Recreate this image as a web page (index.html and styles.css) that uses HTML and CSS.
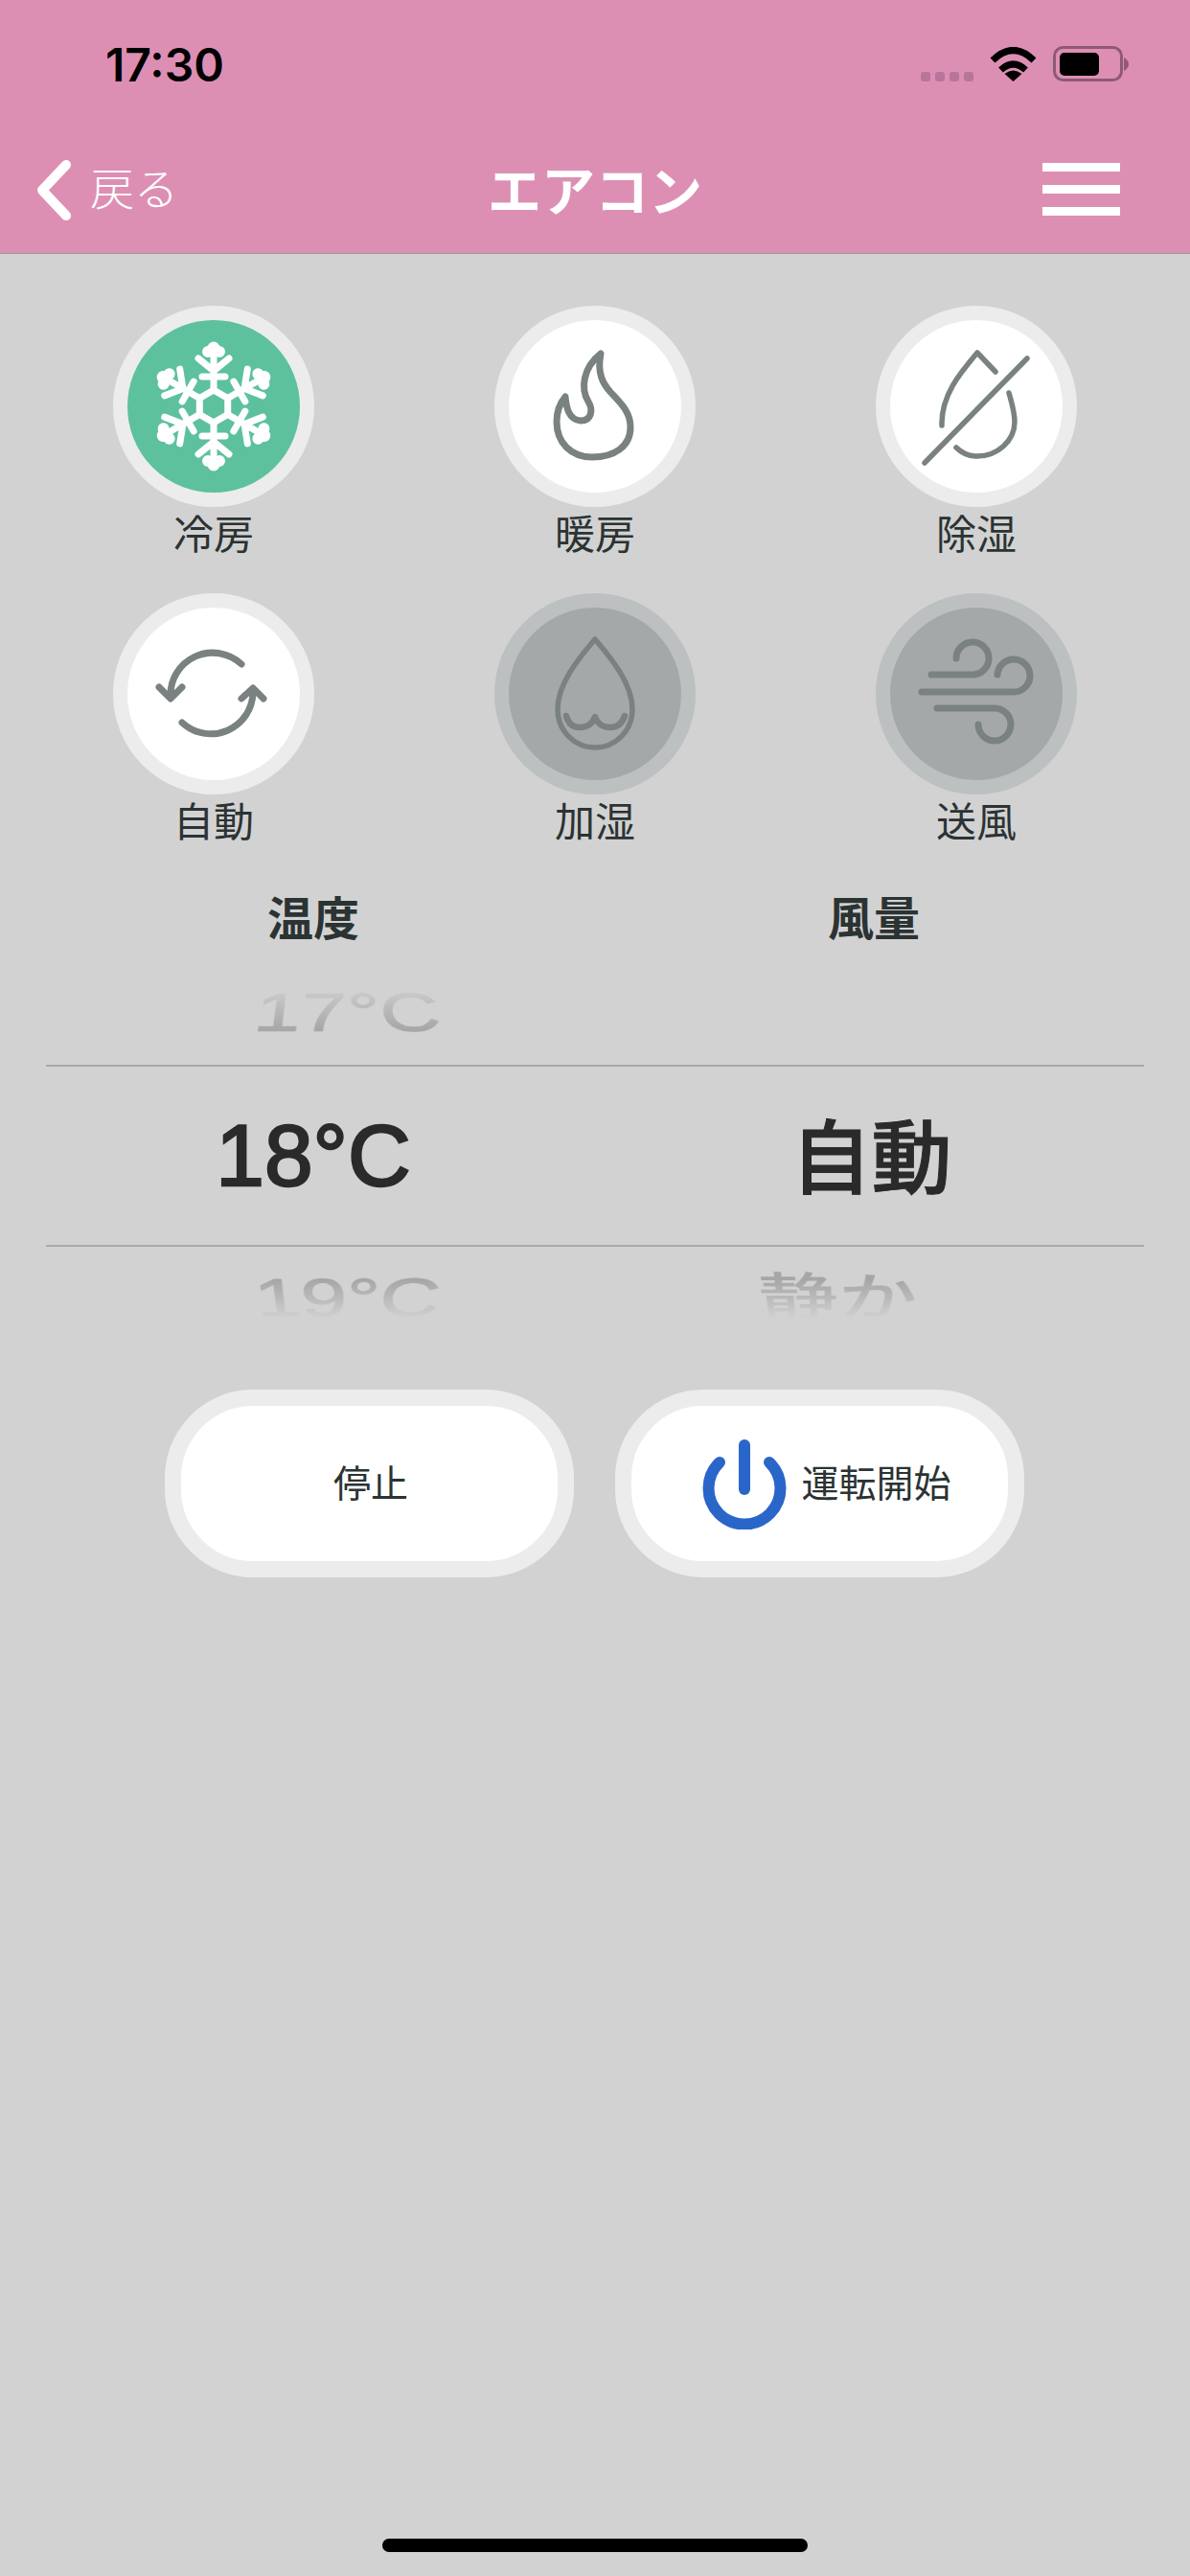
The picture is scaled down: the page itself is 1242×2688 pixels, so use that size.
FILE: index.html
```html
<!DOCTYPE html>
<html lang="ja">
<head>
    <meta charset="UTF-8">
    <meta name="viewport" content="width=device-width, initial-scale=1.0">
    <title>エアコン</title>
    <link rel="stylesheet" href="styles.css">
</head>
<body>
    <!-- 上部バー -->
    <header class="top">
        <div class="status">
            <span class="time">17:30</span>
            <div class="status_icons">
                <div class="dots"><i></i><i></i><i></i><i></i></div>
                <svg class="wifi" viewBox="0 0 49 36">
                    <path d="M3 14Q24.500 -7 46 14" fill="none" stroke="#000" stroke-width="7"/>
                    <path d="M11.500 24Q24.500 12 37.500 24" fill="none" stroke="#000" stroke-width="7"/>
                    <path d="M24.500 36L15.500 28Q24.500 21 33.500 28Z"/>
                </svg>
                <svg class="battery" viewBox="0 0 80 38">
                    <rect x="1.500" y="1.500" width="70" height="34" rx="9" fill="none" stroke="#8d5a78" stroke-width="3"/>
                    <rect x="7" y="7" width="41" height="24" rx="5"/>
                    <path d="M74 12Q79 15 79 19Q79 23 74 26Z" fill="#8d5a78"/>
                </svg>
            </div>
        </div>
        <nav class="nav">
            <a class="back" href="#">
                <svg class="back_arrow" viewBox="0 0 37 63"><path d="M31 5L6 31.500L31 58" fill="none" stroke="#fff" stroke-width="10" stroke-linecap="round" stroke-linejoin="round"/></svg>
                <span class="back_text">戻る</span>
            </a>
            <h1 class="title">エアコン</h1>
            <div class="menu"><i></i><i></i><i></i></div>
        </nav>
    </header>

    <!-- 運転モード -->
    <section class="modes">
        <div class="mode">
            <div class="circle active">
                <svg class="icon snow" viewBox="-70 -70 140 140">
                    <defs>
                        <g id="arm">
                            <path d="M0 -17V-58M-12 -31H12M-16 -50L0 -37L16 -50"/>
                            <circle cx="0" cy="-61" r="3"/>
                            <circle cx="-6" cy="-57" r="2.500"/>
                            <circle cx="6" cy="-57" r="2.500"/>
                        </g>
                    </defs>
                    <path d="M0 -17L14.700 -8.500V8.500L0 17L-14.700 8.500V-8.500Z"/>
                    <use href="#arm"/>
                    <use href="#arm" transform="rotate(60)"/>
                    <use href="#arm" transform="rotate(120)"/>
                    <use href="#arm" transform="rotate(180)"/>
                    <use href="#arm" transform="rotate(240)"/>
                    <use href="#arm" transform="rotate(300)"/>
                </svg>
            </div>
            <span class="mode_label">冷房</span>
        </div>
        <div class="mode">
            <div class="circle">
                <svg class="icon thick" viewBox="-70 -70 140 140">
                    <path d="M6 -55C2 -35 8 -24 16 -15C28 -2 37 6 37 22C37 42 20 53 -3 53C-25 53 -40 38 -40 16C-40 4 -36 -4 -31 -10C-30 0 -28 14 -15 15C-3 15 -2 3 -7 -5C-15 -18 -13 -40 6 -55Z"/>
                </svg>
            </div>
            <span class="mode_label">暖房</span>
        </div>
        <div class="mode">
            <div class="circle">
                <svg class="icon" viewBox="-70 -70 140 140">
                    <path d="M-36 20C-37 -12 -16 -36 1 -56L20 -36M34 -14C38 0 40 6 40 16C40 36 22 52 1 52C-8 52 -15 49 -21 43M-54 59L53 -50"/>
                </svg>
            </div>
            <span class="mode_label">除湿</span>
        </div>
        <div class="mode">
            <div class="circle">
                <svg class="icon thick" viewBox="-70 -70 140 140">
                    <path d="M29 -31A44 44 0 0 0 -45 3M-57 -7L-45 5L-33 -7M-33 30A44 44 0 0 0 41 -2M29 5L41 -6L52 5"/>
                </svg>
            </div>
            <span class="mode_label">自動</span>
        </div>
        <div class="mode">
            <div class="circle off">
                <svg class="icon" viewBox="-70 -70 140 140">
                    <path d="M0 -57C-18 -36 -39 -10 -39 16C-39 39 -21 56 0 56C21 56 39 39 39 16C39 -10 18 -36 0 -57Z"/>
                    <path class="wave" d="M-30 23Q-27 35 -16 35Q-4 35 0 24Q4 35 16 35Q27 35 31 23"/>
                </svg>
            </div>
            <span class="mode_label">加湿</span>
        </div>
        <div class="mode">
            <div class="circle off">
                <svg class="icon thick" viewBox="-70 -70 140 140">
                    <path d="M-47 -20H-4A17 17 0 1 0 -21 -37M-57 -2H39A17 17 0 1 0 22 -20M-41 15H19A17 17 0 1 1 2 32"/>
                </svg>
            </div>
            <span class="mode_label">送風</span>
        </div>
    </section>

    <!-- 温度と風量のピッカー -->
    <section class="picker">
        <div class="picker_row picker_head">
            <span>温度</span>
            <span>風量</span>
        </div>
        <div class="picker_row picker_prev">
            <span class="wheel wheel_up wheel_left">17°C</span>
            <span></span>
        </div>
        <div class="picker_row picker_now">
            <span class="now_temp">18°C</span>
            <span class="now_wind">自動</span>
        </div>
        <div class="picker_row picker_next">
            <span class="wheel wheel_down wheel_left">19°C</span>
            <span class="wheel wheel_down wheel_right">静か</span>
        </div>
    </section>

    <!-- 操作ボタン -->
    <section class="buttons">
        <a class="btn btn_stop" href="#"><span class="btn_text">停止</span></a>
        <a class="btn btn_start" href="#">
            <svg class="power" viewBox="-44 -49 88 94">
                <path d="M-26 -25A37.500 37.500 0 1 0 26 -25"/>
                <path d="M0 -43V3"/>
            </svg>
            <span class="btn_text">運転開始</span>
        </a>
    </section>

    <div class="home_bar"></div>
</body>
</html>
```

FILE: styles.css
```css
*{
    margin: 0;
    padding: 0;
    box-sizing: border-box;
}
body{
    width: 1242px;
    height: 2688px;
    display: flex;
    flex-direction: column;
    background: #d2d2d2;
    color: #2b3333;
    font-family: "Noto Sans CJK JP", "Liberation Sans", sans-serif;
    overflow: hidden;
}
a{
    color: inherit;
    text-decoration: none;
}

/* 上部バー */
.top{
    height: 265px;
    background: #dd8fb3;
    border-bottom: 1px solid #999;
}
.status{
    height: 134px;
    padding: 0 63px 0 110px;
    display: flex;
    align-items: center;
    justify-content: space-between;
}
.time{
    font-family: Inter, "Liberation Sans", sans-serif;
    font-size: 48px;
    font-weight: 600;
    color: #000;
}
.status_icons{
    height: 38px;
    display: flex;
    align-items: flex-end;
    gap: 17px;
}
.dots{
    display: flex;
    gap: 5px;
    margin-bottom: 1px;
}
.dots i{
    width: 10px;
    height: 10px;
    border-radius: 3px;
    background: #b7759a;
}
.wifi{
    width: 49px;
    height: 36px;
    margin-bottom: 1px;
}
.battery{
    width: 80px;
    height: 38px;
}
.nav{
    height: 130px;
    padding: 0 73px;
    display: grid;
    grid-template-columns: 1fr auto 1fr;
    align-items: center;
    color: #fff;
}
.back{
    margin-left: -35px;
    display: flex;
    align-items: center;
    gap: 19px;
    font-size: 46px;
    font-weight: 300;
}
.back_text{
    padding-bottom: 10px;
}
.back_arrow{
    width: 37px;
    height: 63px;
    margin-bottom: 2px;
}
.title{
    font-size: 56px;
    font-weight: 700;
    line-height: 1;
    margin-bottom: 6px;
}
.menu{
    justify-self: end;
    width: 81px;
    display: flex;
    flex-direction: column;
    gap: 14px;
    margin-bottom: 4px;
}
.menu i{
    height: 9px;
    background: #fff;
}

/* 運転モード */
.modes{
    padding: 54px 0 0 24px;
    display: grid;
    grid-template-columns: repeat(3, 398px);
    row-gap: 34px;
}
.mode{
    display: flex;
    flex-direction: column;
    align-items: center;
}
.mode_label{
    font-size: 42px;
    line-height: 52px;
    margin-bottom: 4px;
    font-weight: 400;
}
.circle{
    width: 210px;
    height: 210px;
    border: 15px solid #ececec;
    border-radius: 50%;
    background: #fff;
    display: flex;
    align-items: center;
    justify-content: center;
}
.circle.active{
    background: #5dc19e;
}
.circle.off{
    background: #a5a8a8;
    border-color: #bcc0c1;
}
.icon{
    width: 140px;
    height: 140px;
    flex: none;
    fill: none;
    stroke: #7a8181;
    stroke-width: 5.500;
    stroke-linecap: round;
    stroke-linejoin: round;
}
.icon.thick{
    stroke-width: 7;
}
.icon .wave{
    stroke-width: 6.500;
}
.snow{
    stroke: #fff;
    stroke-width: 7;
}
.snow circle{
    fill: #fff;
}

/* 温度と風量のピッカー */
.picker{
    margin: 40px 48px 0;
}
.picker_row{
    display: grid;
    grid-template-columns: 558px 564px;
    column-gap: 24px;
    justify-items: center;
    align-items: center;
}
.picker_head{
    height: 60px;
    padding-top: 6px;
    align-content: start;
    font-size: 48px;
    line-height: 48px;
    font-weight: 700;
}
.picker_prev{
    height: 126px;
    padding-top: 16px;
}
.picker_now{
    height: 190px;
    border-top: 2px solid #a9a9a9;
    border-bottom: 2px solid #a9a9a9;
    color: #2a2a2a;
}
.picker_next{
    height: 108px;
}
.now_temp{
    font-family: "Liberation Sans", sans-serif;
    font-size: 91px;
    -webkit-text-stroke: 2.500px #2a2a2a;
}
.now_wind{
    font-size: 84px;
    font-weight: 500;
    margin-right: 5px;
    padding-bottom: 8px;
    -webkit-text-stroke: 1px #2a2a2a;
}
.wheel{
    font-family: "Liberation Sans", "Noto Sans CJK JP", sans-serif;
    font-size: 90px;
    line-height: 90px;
    color: transparent;
    -webkit-text-stroke: 1.500px transparent;
    -webkit-background-clip: text;
    background-clip: text;
}
.wheel_up{
    background-image: linear-gradient(#cdcdcd 5%, #a6a6a6 85%);
    transform: perspective(700px) translateZ(-30px) rotateX(50deg);
}
.wheel_down{
    background-image: linear-gradient(#a6a6a6 15%, #d2d2d2 90%);
    transform: perspective(700px) translateZ(-30px) rotateX(-50deg);
}
.wheel_left{
    margin-left: 72px;
}
.wheel_right{
    margin-right: 74px;
    font-size: 86px;
    font-weight: 500;
    -webkit-text-stroke: 0;
}

/* 操作ボタン */
.buttons{
    margin-top: 41px;
    padding-right: 2px;
    display: flex;
    justify-content: center;
    gap: 43px;
}
.btn{
    width: 427px;
    height: 196px;
    border: 17px solid #ececec;
    border-radius: 92px;
    background: #fff;
    display: flex;
    align-items: center;
    justify-content: center;
    font-size: 39px;
    font-weight: 400;
}
.btn_text{
    padding-bottom: 6px;
}
.btn_stop{
    padding-left: 4px;
}
.btn_start{
    gap: 15px;
    padding-left: 16px;
}
.power{
    width: 88px;
    height: 94px;
    margin-top: 2px;
    fill: none;
    stroke: #2a66c9;
    stroke-width: 12;
    stroke-linecap: round;
}

.home_bar{
    width: 444px;
    height: 14px;
    margin: auto auto 25px;
    border-radius: 7px;
    background: #000;
}
```
